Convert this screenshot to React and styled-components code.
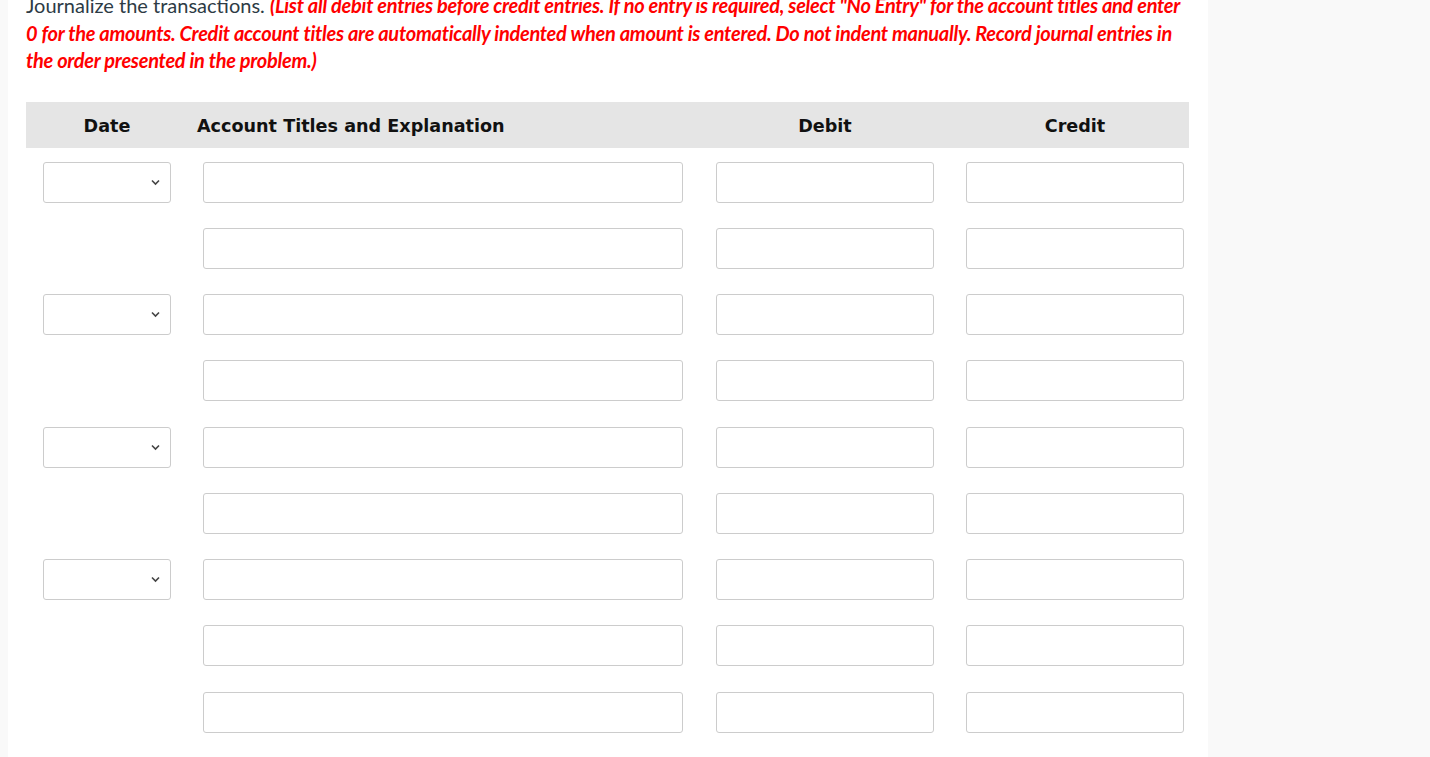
import styled, { createGlobalStyle } from "styled-components";

const GlobalStyle = createGlobalStyle`
  html, body {
    margin: 0;
    padding: 0;
    background: #f9f9f9;
    overflow: hidden;
  }
`;

const Panel = styled.div`
  display: flow-root;
  margin-left: 8px;
  width: 1200px;
  min-height: 100vh;
  background: #fff;
  box-sizing: border-box;
  padding: 0 19px 0 18px;
`;

const Instructions = styled.p`
  margin: -8px 0 0;
  font-family: Lato, "Liberation Sans", sans-serif;
  font-size: 20px;
  line-height: 27.5px;
  color: #2d3b45;
`;

const Warning = styled.em`
  color: #ff0000;
  font-weight: 700;
  font-style: italic;
  letter-spacing: -0.28px;
`;

const Table = styled.div`
  margin-top: 27px;
  width: 1163px;
`;

const cols = "161px 512px 250px 240px";

const HeaderRow = styled.div`
  display: grid;
  grid-template-columns: ${cols};
  height: 46px;
  align-items: center;
  background: #e5e5e5;
  margin-bottom: 14px;
`;

const HeadCell = styled.div`
  font-family: "DejaVu Sans", Verdana, sans-serif;
  font-weight: 700;
  font-size: 17.6px;
  padding-top: 2px;
  color: #111;
  padding-left: ${(p) => p.$pad}px;
  width: ${(p) => (p.$w ? `${p.$w}px` : "auto")};
  text-align: ${(p) => (p.$left ? "left" : "center")};
`;

const Row = styled.div`
  display: grid;
  grid-template-columns: ${cols};
  height: 40px;
  margin-bottom: 26.25px;
`;

const Cell = styled.div`
  padding-left: ${(p) => p.$pad}px;
`;

const Field = styled.div`
  box-sizing: border-box;
  width: ${(p) => p.$w}px;
  height: 41px;
  border: 1px solid #cccccc;
  border-radius: 3px;
  background: #fff;
  position: relative;
`;

const Chevron = styled.svg`
  position: absolute;
  right: 10px;
  top: 16px;
`;

const DateSelect = () => (
  <Field $w={128}>
    <Chevron width="9" height="7" viewBox="0 0 9 7">
      <polyline points="1,1.5 4.5,5 8,1.5" fill="none" stroke="#444" strokeWidth="1.6" />
    </Chevron>
  </Field>
);

const rows = [true, false, true, false, true, false, true, false, false];

export default function App() {
  return (
    <>
      <GlobalStyle />
      <Panel>
        <Instructions>
          Journalize the transactions.{" "}
          <Warning>
            (List all debit entries before credit entries. If no entry is required, select "No Entry" for the account
            titles and enter 0 for the amounts. Credit account titles are automatically indented when amount is
            entered. Do not indent manually. Record journal entries in the order presented in the problem.)
          </Warning>
        </Instructions>
        <Table>
          <HeaderRow>
            <HeadCell $pad={17} $w={128}>Date</HeadCell>
            <HeadCell $pad={10} $left>Account Titles and Explanation</HeadCell>
            <HeadCell $pad={17} $w={218}>Debit</HeadCell>
            <HeadCell $pad={17} $w={218}>Credit</HeadCell>
          </HeaderRow>
          {rows.map((hasDate, i) => (
            <Row key={i}>
              <Cell $pad={17}>{hasDate && <DateSelect />}</Cell>
              <Cell $pad={16}>
                <Field $w={480} />
              </Cell>
              <Cell $pad={17}>
                <Field $w={218} />
              </Cell>
              <Cell $pad={17}>
                <Field $w={218} />
              </Cell>
            </Row>
          ))}
        </Table>
      </Panel>
    </>
  );
}
